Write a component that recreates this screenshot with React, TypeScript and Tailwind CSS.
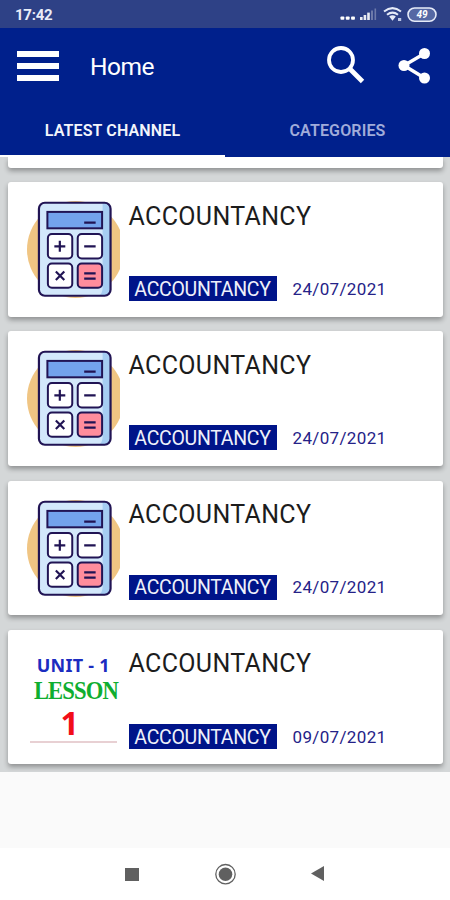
import React from "react";

function StatusBar() {
  return (
    <div className="flex h-7 shrink-0 items-center justify-between bg-[#2e4186] pl-[15px] pr-[13px] text-white">
      <span className="pt-[2px] text-[15px] font-bold leading-none tracking-[-0.25px] text-[#e9edf8]">17:42</span>
      <svg width="98" height="28" viewBox="0 0 98 28" fill="none">
        <g fill="#fff">
          <rect x="1.5" y="16.5" width="3.8" height="3.2" rx="0.8" />
          <rect x="6.8" y="16.5" width="3.8" height="3.2" rx="0.8" />
          <rect x="12.1" y="16.5" width="3.8" height="3.2" rx="0.8" />
          <rect x="21" y="17" width="2.6" height="3" opacity="0.9" />
          <rect x="24.6" y="15" width="2.6" height="5" opacity="0.9" />
          <rect x="28.2" y="12.6" width="2.6" height="7.4" opacity="0.9" />
          <rect x="32" y="10.5" width="2" height="9.5" opacity="0.3" />
          <rect x="35.5" y="8.5" width="1.6" height="11.5" opacity="0.3" />
        </g>
        <g stroke="#e6ebf8" strokeWidth="2">
          <path d="M45 11.5Q53.5 4.8 62 11.5" />
          <path d="M48 14.8Q53.5 10.4 59 14.8" />
        </g>
        <path d="M50.2 16.6Q53.5 14 56.8 16.6L53.5 20.8Z" fill="#e6ebf8" />
        <rect x="59" y="18" width="3.2" height="3" fill="#bcc6e4" />
        <rect x="69" y="8" width="28" height="13.2" rx="6.6" fill="#5568a4" stroke="#e6ebf8" strokeWidth="1.6" />
        <text x="83" y="18.2" textAnchor="middle" fill="#fff" fontFamily="Roboto, sans-serif" fontWeight="700" fontSize="10" fontStyle="italic">49</text>
      </svg>
    </div>
  );
}

function Header() {
  return (
    <header className="flex h-[129px] shrink-0 flex-col bg-[#00208c]">
      <div className="flex h-[76px] shrink-0 items-center pl-[17px] pr-[18px]">
        <div className="mb-[1px] flex w-[42px] flex-col gap-[6px]">
          <div className="h-[6px] bg-white" />
          <div className="h-[6px] bg-white" />
          <div className="h-[6px] bg-white" />
        </div>
        <h1 className="ml-[31px] pt-[3px] text-[24.5px] leading-none tracking-[-0.5px] text-white">Home</h1>
        <svg className="ml-auto" width="40" height="40" viewBox="0 0 40 40" fill="none" stroke="#fff">
          <circle cx="14" cy="14" r="12" strokeWidth="3.8" />
          <path d="M23 23L35.5 35.5" strokeWidth="4.8" />
        </svg>
        <svg className="ml-[31px]" width="34" height="38" viewBox="0 0 34 38" fill="#fff" stroke="#fff">
          <path d="M26.5 6.5L6 18.5L26.5 31" fill="none" strokeWidth="3.4" />
          <circle cx="26.5" cy="6.5" r="5.5" stroke="none" />
          <circle cx="6" cy="18.5" r="5.5" stroke="none" />
          <circle cx="26.5" cy="31" r="5.5" stroke="none" />
        </svg>
      </div>
      <nav className="grid h-[53px] grid-cols-2 text-center text-[16px] font-semibold leading-[49px] tracking-[0.15px]">
        <div className="border-b-2 border-white pt-[2px] text-[#f3f5fb]">LATEST CHANNEL</div>
        <div className="pt-[2px] text-[#a0acda]">CATEGORIES</div>
      </nav>
    </header>
  );
}

function Calculator() {
  return (
    <svg className="h-full w-full" viewBox="0 0 94 100" fill="none">
      <circle cx="48.8" cy="50.5" r="48.8" fill="#f0c583" />
      <rect x="12" y="3.5" width="72" height="93.5" rx="6" fill="#d3e8fb" />
      <path d="M76 3.5H78Q84 3.5 84 9.5V91Q84 97 78 97H72Q76 95 76 89Z" fill="#a6cdf2" />
      <rect x="12" y="3.5" width="72" height="93.5" rx="6" stroke="#211454" strokeWidth="2.2" />
      <rect x="20.5" y="12.7" width="55" height="16.5" fill="#73a3ec" stroke="#211454" strokeWidth="2" />
      <g fill="#fff" stroke="#211454" strokeWidth="2">
        <rect x="21" y="35" width="24.5" height="24.5" rx="4" />
        <rect x="51" y="35" width="24.5" height="24.5" rx="4" />
        <rect x="21" y="64.5" width="24.5" height="24.5" rx="4" />
        <rect x="51" y="64.5" width="24.5" height="24.5" rx="4" fill="#ff8d9c" />
      </g>
      <path d="M57.5 23.4H69M27.5 47.3H38.5M33 41.8V52.8M57.5 47.3H69M29 72.7L37.5 81.2M37.5 72.7L29 81.2M57.5 74.5H69M57.5 79.7H69" stroke="#211454" strokeWidth="2.2" />
    </svg>
  );
}

function LessonThumb() {
  return (
    <div className="flex h-full w-full flex-col items-center whitespace-nowrap pt-[6px]">
      <div className="font-['Noto_Sans',sans-serif] text-[18px] font-bold leading-[24px] tracking-[0.25px] text-[#1c2cc0]">UNIT - 1</div>
      <div className="scale-x-[0.87] pl-[6px] pt-[1px] font-['Liberation_Serif',serif] text-[26px] font-bold leading-[26px] tracking-[-1px] text-[#0fae30]">LESSON</div>
      <div className="mr-[7px] font-['Noto_Sans',sans-serif] text-[32px] font-bold leading-[37px] text-[#f20d18]">1</div>
      <div className="h-[2px] w-[87px] bg-[#e8d0d3]" />
    </div>
  );
}

function ChannelCard({ date, children }: { date: string; children: React.ReactNode }) {
  return (
    <article className="flex h-[134.5px] shrink-0 rounded-[3px] bg-white pl-[19px] shadow-[0_3px_5px_rgba(0,0,0,0.32)]">
      <div className="mt-[17px] h-[100px] w-[93.5px] shrink-0 overflow-hidden">{children}</div>
      <div className="ml-[8.5px] flex flex-col pt-[20.5px]">
        <h2 className="text-[25px] leading-[28px] tracking-[0.35px] text-[#1c1c1c]">ACCOUNTANCY</h2>
        <div className="mt-[45px] flex h-[26px] items-center">
          <span className="flex h-[25px] w-[148px] items-center justify-center bg-[#001489] pt-[2px] text-[19.5px] font-[450] tracking-[-0.3px] text-[#eef0fa]">ACCOUNTANCY</span>
          <time className="ml-[16px] pt-[2px] text-[17px] tracking-[0.35px] text-[#252287]">{date}</time>
        </div>
      </div>
    </article>
  );
}

export default function App() {
  return (
    <div className="flex h-[900px] w-[450px] flex-col overflow-hidden bg-[#fafafa] font-[Roboto,sans-serif]">
      <StatusBar />
      <Header />
      <main className="flex h-[614.5px] shrink-0 flex-col gap-[14.7px] overflow-hidden bg-[#d4d7d8] px-[7.5px]">
        <div className="h-[10.5px] shrink-0 rounded-b-[3px] bg-white shadow-[0_3px_5px_rgba(0,0,0,0.32)]" />
        <ChannelCard date="24/07/2021"><Calculator /></ChannelCard>
        <ChannelCard date="24/07/2021"><Calculator /></ChannelCard>
        <ChannelCard date="24/07/2021"><Calculator /></ChannelCard>
        <ChannelCard date="09/07/2021"><LessonThumb /></ChannelCard>
      </main>
      <footer className="mt-auto flex h-[52px] items-center bg-white">
        <div className="ml-[125px] h-[13px] w-[14px] bg-[#606060]" />
        <svg className="ml-[75px]" width="23" height="23" viewBox="0 0 23 23">
          <circle cx="11.5" cy="11.2" r="9.7" fill="none" stroke="#606060" strokeWidth="1.3" />
          <circle cx="11.5" cy="11.2" r="6.8" fill="#606060" />
        </svg>
        <svg className="ml-[74px]" width="14" height="16" viewBox="0 0 14 16">
          <path d="M0 7.5L13 0V15Z" fill="#606060" />
        </svg>
      </footer>
    </div>
  );
}
